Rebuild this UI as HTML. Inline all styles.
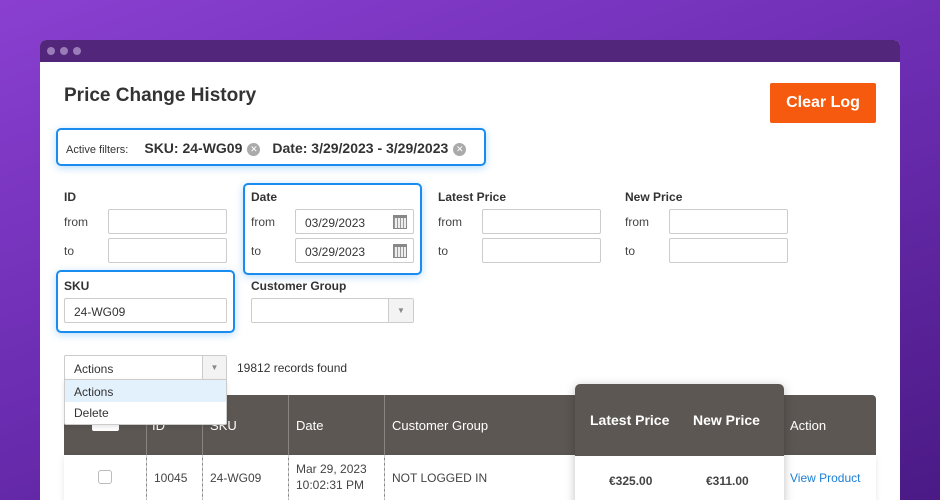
<!DOCTYPE html>
<html><head><meta charset="utf-8"><style>
*{box-sizing:border-box;margin:0;padding:0}
html,body{width:940px;height:500px;overflow:hidden}
body{font-family:"Liberation Sans",sans-serif;background:linear-gradient(160deg,#8a3fd0 0%,#6a2cb0 50%,#4b1a85 100%);position:relative;color:#333}
.a{position:absolute}
.win{left:40px;top:40px;width:860px;height:460px;background:#fff;border-radius:6px 6px 0 0;overflow:hidden}
.bar{left:0;top:0;width:860px;height:22px;background:#52267a}
.dot{width:8px;height:8px;border-radius:50%;background:#9a7cb8;top:7px}
.lbl{font-size:12px;font-weight:bold;color:#333}
.sm{font-size:12px;color:#444}
.inp{border:1px solid #ccc;border-radius:2px;height:25px;background:#fff;font-size:12px;color:#333;padding:6px 9px}
.focus{border:2px solid #1a8cf0;border-radius:5px;box-shadow:0 2px 8px rgba(26,140,240,.3)}
.x{display:inline-block;width:13px;height:13px;border-radius:50%;background:#aaa;color:#fff;font-size:9px;line-height:13px;text-align:center;vertical-align:1px;margin-left:5px}
.th{color:#fff;font-size:13px}
.cal{width:14px;height:14px;border:1px solid #888;background:repeating-linear-gradient(90deg,#999 0 1px,#eee 1px 3px);border-top:3px solid #888}
</style></head><body>
<div class="a win">
 <div class="a bar"></div>
 <div class="a dot" style="left:7px"></div><div class="a dot" style="left:20px"></div><div class="a dot" style="left:33px"></div>
 <div class="a" style="left:24px;top:45px;font-size:19px;font-weight:bold;color:#333">Price Change History</div>
 <div class="a" style="left:730px;top:43px;width:106px;height:40px;background:#f55a0f;color:#fff;font-size:16px;font-weight:bold;text-align:center;line-height:40px;border-radius:2px">Clear Log</div>
 <div class="a focus" style="left:16px;top:88px;width:430px;height:38px;padding:10px 8px;white-space:nowrap"><span style="font-size:11px;color:#333">Active filters:</span><span style="font-size:14px;font-weight:bold;margin-left:16px">SKU: 24-WG09</span><span class="x">✕</span><span style="font-size:14px;font-weight:bold;margin-left:12px">Date: 3/29/2023 - 3/29/2023</span><span class="x">✕</span></div>

 <div class="a lbl" style="left:24px;top:150px">ID</div>
 <div class="a sm" style="left:24px;top:175px">from</div><div class="a inp" style="left:68px;top:169px;width:119px"></div>
 <div class="a sm" style="left:24px;top:204px">to</div><div class="a inp" style="left:68px;top:198px;width:119px"></div>

 <div class="a focus" style="left:203px;top:143px;width:179px;height:92px"></div>
 <div class="a lbl" style="left:211px;top:150px">Date</div>
 <div class="a sm" style="left:211px;top:175px">from</div><div class="a inp" style="left:255px;top:169px;width:119px">03/29/2023</div><div class="a cal" style="left:353px;top:175px"></div>
 <div class="a sm" style="left:211px;top:204px">to</div><div class="a inp" style="left:255px;top:198px;width:119px">03/29/2023</div><div class="a cal" style="left:353px;top:204px"></div>

 <div class="a lbl" style="left:398px;top:150px">Latest Price</div>
 <div class="a sm" style="left:398px;top:175px">from</div><div class="a inp" style="left:442px;top:169px;width:119px"></div>
 <div class="a sm" style="left:398px;top:204px">to</div><div class="a inp" style="left:442px;top:198px;width:119px"></div>
 <div class="a lbl" style="left:585px;top:150px">New Price</div>
 <div class="a sm" style="left:585px;top:175px">from</div><div class="a inp" style="left:629px;top:169px;width:119px"></div>
 <div class="a sm" style="left:585px;top:204px">to</div><div class="a inp" style="left:629px;top:198px;width:119px"></div>

 <div class="a focus" style="left:16px;top:230px;width:179px;height:63px"></div>
 <div class="a lbl" style="left:24px;top:239px">SKU</div>
 <div class="a inp" style="left:24px;top:258px;width:163px">24-WG09</div>
 <div class="a lbl" style="left:211px;top:239px">Customer Group</div>
 <div class="a inp" style="left:211px;top:258px;width:163px"></div>
 <div class="a" style="left:348px;top:259px;width:25px;height:23px;border-left:1px solid #ccc;background:#f3f3f3;font-size:8px;color:#888;text-align:center;line-height:23px">▼</div>

 <div class="a inp" style="left:24px;top:315px;width:163px">Actions</div>
 <div class="a" style="left:162px;top:316px;width:24px;height:23px;border-left:1px solid #ccc;background:#f3f3f3;font-size:8px;color:#888;text-align:center;line-height:23px">▼</div>
 <div class="a sm" style="left:197px;top:321px;color:#333">19812 records found</div>

 <div class="a" style="left:24px;top:355px;width:812px;height:60px;background:#5c5753;border-radius:4px 4px 0 0"></div>
 <div class="a" style="left:24px;top:415px;width:812px;height:60px;background:#fff;box-shadow:0 2px 6px rgba(0,0,0,.1)"></div>
 <div class="a" style="left:106px;top:355px;height:120px;border-left:1px solid #8a8480"></div>
 <div class="a" style="left:162px;top:355px;height:120px;border-left:1px solid #8a8480"></div>
 <div class="a" style="left:248px;top:355px;height:120px;border-left:1px solid #8a8480"></div>
 <div class="a" style="left:344px;top:355px;height:120px;border-left:1px solid #8a8480"></div>
 <div class="a" style="left:106px;top:415px;height:60px;border-left:1px dashed #ccc"></div>
 <div class="a" style="left:162px;top:415px;height:60px;border-left:1px dashed #ccc"></div>
 <div class="a" style="left:248px;top:415px;height:60px;border-left:1px dashed #ccc"></div>
 <div class="a" style="left:344px;top:415px;height:60px;border-left:1px dashed #ccc"></div>
 <div class="a th" style="left:112px;top:378px">ID</div>
 <div class="a th" style="left:170px;top:378px">SKU</div>
 <div class="a th" style="left:256px;top:378px">Date</div>
 <div class="a th" style="left:352px;top:378px">Customer Group</div>
 <div class="a th" style="left:750px;top:378px">Action</div>
 <div class="a" style="left:52px;top:378px;width:27px;height:13px;background:#fff;border-radius:2px"></div>
 <div class="a" style="left:58px;top:430px;width:14px;height:14px;border:1px solid #bbb;border-radius:3px"></div>
 <div class="a sm" style="left:114px;top:431px">10045</div>
 <div class="a sm" style="left:170px;top:431px">24-WG09</div>
 <div class="a sm" style="left:256px;top:421px;line-height:16px">Mar 29, 2023<br>10:02:31 PM</div>
 <div class="a sm" style="left:352px;top:431px">NOT LOGGED IN</div>
 <div class="a" style="left:750px;top:431px;font-size:12px;color:#1a7fd6">View Product</div>

 <div class="a" style="left:535px;top:344px;width:209px;height:140px;background:#fff;border-radius:5px 5px 0 0;box-shadow:0 2px 10px rgba(0,0,0,.25);overflow:hidden">
  <div style="height:72px;background:#5c5753"></div>
  <div class="a" style="left:15px;top:28px;color:#fff;font-size:14px;font-weight:bold">Latest Price</div>
  <div class="a" style="left:118px;top:28px;color:#fff;font-size:14px;font-weight:bold">New Price</div>
  <div class="a" style="left:34px;top:90px;font-size:12px;font-weight:bold;color:#444">€325.00</div>
  <div class="a" style="left:131px;top:90px;font-size:12px;font-weight:bold;color:#444">€311.00</div>
 </div>

 <div class="a" style="left:24px;top:339px;width:163px;height:46px;background:#fff;border:1px solid #ccc;border-radius:0 0 2px 2px;box-shadow:0 2px 4px rgba(0,0,0,.1)">
  <div style="height:22px;background:#e3f1fc;padding:5px 9px;font-size:12px;color:#333">Actions</div>
  <div style="padding:4px 9px;font-size:12px;color:#333">Delete</div>
 </div>
</div>
</body></html>
